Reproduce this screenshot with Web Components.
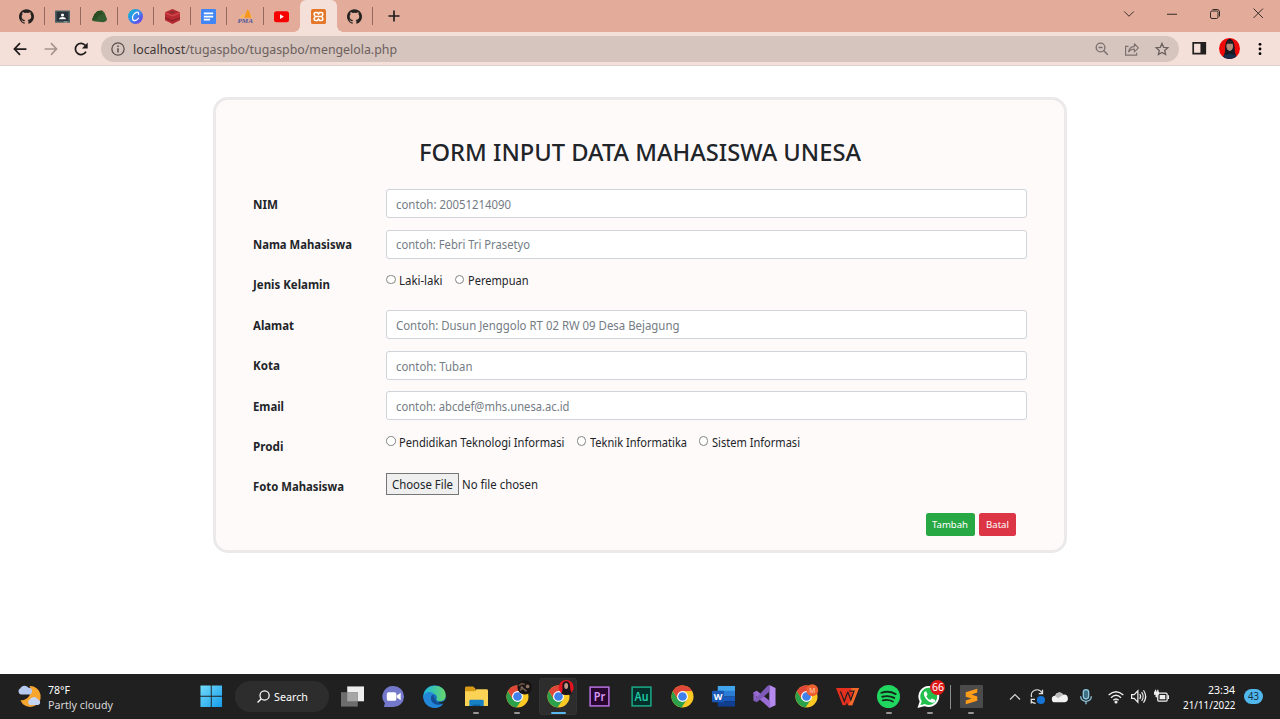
<!DOCTYPE html>
<html lang="id">
<head>
<meta charset="utf-8">
<title>Form Input Data Mahasiswa</title>
<style>
html,body{margin:0;height:100%;overflow:hidden}
body{font-family:"Noto Sans","Open Sans",sans-serif;background:#fff;color:#212529}
</style>
</head>
<body>
<desktop-screen></desktop-screen>
<script>
const chrome = `<circle cx="12" cy="12" r="11.5" fill="#fbc924"/><path d="M12 12 2.1 6.2A11.5 11.5 0 0 1 22 6.3L12 6.4Z" fill="#df4738"/><path d="M2.1 6.2A11.5 11.5 0 0 0 11 23.4L16.6 15 12 12 7.2 14.8Z" fill="#2ca14b"/><path d="M2.1 6.2A11.5 11.5 0 0 1 22 6.3H12L7.3 9.5 7 14.5Z" fill="#df4738"/><circle cx="12" cy="12" r="5.7" fill="#fff"/><circle cx="12" cy="12" r="4.5" fill="#3f80ea"/>`;
const ICONS = {
github:`<path fill="#24211f" d="M12 .3a12 12 0 0 0-3.8 23.4c.6.1.8-.3.8-.6v-2c-3.3.7-4-1.6-4-1.6-.6-1.4-1.4-1.8-1.4-1.8-1-.7.1-.7.1-.7 1.2 0 1.900 1.200 1.900 1.200 1 1.800 2.800 1.300 3.500 1 0-.8.4-1.300.7-1.600-2.700-.3-5.500-1.300-5.500-6 0-1.200.5-2.300 1.300-3.100-.2-.4-.6-1.600 0-3.200 0 0 1-.3 3.400 1.200a11.500 11.500 0 0 1 6 0c2.300-1.500 3.300-1.200 3.300-1.200.6 1.600.2 2.800 0 3.200.900.8 1.300 1.900 1.300 3.200 0 4.600-2.800 5.600-5.500 5.900.5.4.900 1 .900 2.200v3.300c0 .3.1.7.8.6A12 12 0 0 0 12 .3"/>`,
classroom:`<rect x="0" y="2.500" width="24" height="19.500" rx="1" fill="#4d6266"/><rect x="2.500" y="4.500" width="19" height="15" fill="#263238"/><circle cx="12" cy="9.500" r="2.500" fill="#fff"/><path d="M6.500 16.500c0-5 11-5 11 0Z" fill="#fff"/><path d="M14 19.500h6v2.500h-6z" fill="#89979a"/>`,
hill:`<path d="M0 17 4 8 9 3l7-1 4 4 4 10-1 3-5 2-12-1-5-1Z" fill="#355b30"/><path d="M9 3 4 8 0 17l7-1 5-7 5 1-2-7Z" fill="#2a4d24"/>`,
canva:`<defs><linearGradient id="g" x2="1" y2="1"><stop stop-color="#04bfcd"/><stop offset=".5" stop-color="#3b86ed"/><stop offset="1" stop-color="#7d2ae8"/></linearGradient></defs><circle cx="12" cy="12" r="12" fill="url(#g)"/><path d="M16.800 8.800c1-2.800-.8-4.300-3.300-3.300C9.500 7 7 11.500 7.200 14.800c.3 5.500 6 4.800 9.500 0" fill="none" stroke="#fff" stroke-width="2" stroke-linecap="round"/>`,
redbox:`<path d="m0 5 12-5 12 5v13l-12 6-12-6Z" fill="#b52b31"/><path d="m0 5 12 5 12-5v2l-12 5L0 7Z" fill="#d64a50"/><path d="m0 13 12 5 12-5v2l-12 5L0 15Z" fill="#8b1f27"/><path d="m6 5 5-2 6 2-5 2Z" fill="#843033"/>`,
docs:`<rect width="24" height="24" rx="1.500" fill="#4285f4"/><path d="M4.500 7h15M4.500 12h15M4.500 17h10" stroke="#fff" stroke-width="2.800"/>`,
pma:`<path d="M10 14 15 0c3 3 5 8 6 14Z" fill="#f8981a"/><path d="M2 14 11 5l-2 9ZM19 6l4 8h-2Z" fill="#f8ba54"/><text x="-1" y="23" font-size="10" font-style="italic" font-weight="700" font-family="Liberation Serif,serif" fill="#51569a" textLength="25" lengthAdjust="spacingAndGlyphs">PMA</text>`,
youtube:`<rect x="0" y="3.500" width="24" height="17.500" rx="4" fill="#f60000"/><path d="m9.700 8.500 6 3.700-6 3.700Z" fill="#fff"/>`,
xampp:`<rect width="24" height="24" rx="3" fill="#e57729"/><path d="M7.500 5.500h2.700L12 8l1.800-2.500h2.700a2.500 2.500 0 0 1 2.500 2.500c0 2-1 3-2 4 1 1 2 2 2 4a2.500 2.500 0 0 1-2.500 2.500h-2.700L12 16l-1.800 2.500H7.500A2.500 2.500 0 0 1 5 16c0-2 1-3 2-4-1-1-2-2-2-4a2.500 2.500 0 0 1 2.500-2.500Z" fill="none" stroke="#fff" stroke-width="2.500"/><path d="M8 12h8" stroke="#fff" stroke-width="2.500"/>`,
plus:`<path d="M12 2.500v19M2.500 12h19" stroke="#231d1b" stroke-width="2.900"/>`,
down:`<path d="m2.500 7 9.500 9.500L21.500 7" fill="none" stroke="#332a27" stroke-width="1.900"/>`,
up:`<path d="m2 17 10-10 10 10" fill="none" stroke="#ddd" stroke-width="2.200"/>`,
min:`<path d="M2 12.500h20" stroke="#332a27" stroke-width="2"/>`,
max:`<rect x="3" y="6" width="15" height="15" rx="3" fill="none" stroke="#332a27" stroke-width="2"/><path d="M7 3h9q5 0 5 5v9" fill="none" stroke="#332a27" stroke-width="2"/>`,
close:`<path d="m3 3 18 18M21 3 3 21" stroke="#332a27" stroke-width="1.900"/>`,
back:`<path d="M23 12H3M12 2 2.500 12 12 22" fill="none" stroke="#201c1b" stroke-width="3"/>`,
forward:`<path d="M1 12h20M12 2l9.500 10L12 22" fill="none" stroke="#a4938e" stroke-width="2.800"/>`,
reload:`<path d="M20.500 16.500A9.600 9.600 0 1 1 19.500 6" fill="none" stroke="#201c1b" stroke-width="3"/><path d="M23.500 1v10h-10Z" fill="#201c1b"/>`,
info:`<circle cx="12" cy="12" r="10.500" fill="none" stroke="#5a504d" stroke-width="2.200"/><path d="M12 10.500V18M12 6v2.500" stroke="#5a504d" stroke-width="2.600"/>`,
zoomout:`<circle cx="9.500" cy="9.500" r="7.500" fill="none" stroke="#7b706d" stroke-width="2.300"/><path d="m15 15 7 7M6 9.500h7" stroke="#7b706d" stroke-width="2.500"/>`,
share:`<path d="M6 7.500H1v15h19v-4" fill="none" stroke="#7b706d" stroke-width="2"/><path d="M6 17c1-6 4-9 10-9V3l7 7-7 7v-5q-6 0-10 5Z" fill="none" stroke="#7b706d" stroke-width="1.900" stroke-linejoin="round"/>`,
star:`<path d="m12 2.500 2.900 6.600 7.100.7-5.400 4.700 1.600 7L12 17.800l-6.200 3.700 1.600-7L2 9.800l7.100-.7Z" fill="none" stroke="#6a605d" stroke-width="2.200"/>`,
panel:`<path d="M2 3h20v18H2Z" fill="none" stroke="#221f1e" stroke-width="2.800"/><path d="M14 3h8v18h-8Z" fill="#221f1e"/>`,
avatar:`<defs><clipPath id="a"><circle cx="12" cy="12" r="12"/></clipPath></defs><g clip-path="url(#a)"><path fill="#ee0909" d="M0 0h24v24H0z"/><path d="M5 24c0-5 2-6 2-11 0-17 11-15 11 0 0 5 2 6 2 11Z" fill="#171923"/><ellipse cx="12.300" cy="9.300" rx="3.800" ry="5.500" fill="#b38b7b"/><path d="M8 6.500c1-4 7-4 8 0Z" fill="#201d25"/><path d="M3 22c5-5 14-5 18 0v3H3Z" fill="#1b2d4b"/></g>`,
menu:`<circle cx="12" cy="4" r="2.400"/><circle cx="12" cy="12" r="2.400"/><circle cx="12" cy="20" r="2.400"/>`,
weather:`<path d="M13 2a11 11 0 1 1-9.500 15A10 10 0 0 0 13 2Z" fill="#f6a52e"/><path d="M4 11a3.500 3.500 0 0 1-.5-6.500A5 5 0 0 1 12 4a3.500 3.500 0 0 1 .5 7Z" fill="#b6c9ee"/><path d="M13.500 22a3.300 3.300 0 0 1 0-6 4.500 4.500 0 0 1 8-.2 3.200 3.200 0 0 1 .5 6.200Z" fill="#c5d5f4"/>`,
windows:`<defs><linearGradient id="w" x2="1" y2="1"><stop stop-color="#73dcfb"/><stop offset="1" stop-color="#159be9"/></linearGradient></defs><path d="M.5.500h11v11H.5ZM12.500.500h11v11h-11ZM.5 12.500h11v11H.5ZM12.500 12.500h11v11h-11Z" fill="url(#w)"/>`,
search:`<circle cx="14" cy="10" r="8.500" fill="none" stroke="#fff" stroke-width="2.300"/><path d="m8 16-7 7" stroke="#fff" stroke-width="2.500"/>`,
taskview:`<path d="M6.500 1.500H24V17H6.500Z" fill="#eeeeef"/><path d="M0 7.500h17.500v15H0Z" fill="#6d6d6d"/><path d="M6.500 7.500h11V17h-11Z" fill="#a6a6a6"/>`,
chat:`<path d="M12 1a11 11 0 0 1 0 22H2l1-4A11 11 0 0 1 12 1Z" fill="#7478cb"/><rect x="5" y="7.500" width="10" height="9" rx="2" fill="#fff"/><path d="m15.500 11 4-3v8l-4-3Z" fill="#fff"/>`,
edge:`<defs><linearGradient id="e" x2="1"><stop stop-color="#1bb8dc"/><stop offset="1" stop-color="#67d66a"/></linearGradient></defs><circle cx="12" cy="12" r="11.700" fill="#176fc1"/><path d="M.5 11C2-3 24-2 23.700 11c0 7-8 7-10 4 2-2 0-6-3-6C6 8 2 10 .5 14Z" fill="url(#e)"/><path d="M.5 12c2-6 10-6 12-1-3-2-5 1-4 4 1 5 7 7 12.500 5C14 28 0 23 .5 12Z" fill="#2486d6"/><path d="M9 11c-3 8 6 12 12.500 7.500-3 1-9 0-8-3.500-3-1-3-4-1.500-5Z" fill="#144f93"/><path d="M15.500 17.500c3 1 6 0 8-2.500l1 2-3 2c-2 1-4 .5-6-1.500Z" fill="#202020"/>`,
explorer:`<path d="M0 3q0-1.500 1.500-1.500h7L11 4v4H0Z" fill="#d99b16"/><path d="M0 6.500h10l2-2h10.500Q24 4.500 24 6v16H0Z" fill="#fcd354"/><path d="M4.500 22v-5q0-1.500 1.500-1.500h12q1.500 0 1.500 1.500v5Z" fill="#1780c5"/><path d="M8 22v-1.500h8V22Z" fill="#0f5f99"/>`,
chrome,
chromedark: chrome+`<g transform="translate(19.500 2.500)"><circle r="7.500" fill="#171313"/><path d="M-6-2-3-4 0-3M-5 3-2 1 2 4" stroke="#6b5749" stroke-width="1.700" fill="none"/><circle cx="3" cy="-1" r="2" fill="#8b7061"/><circle cx="-3" cy="0" r="1.300" fill="#7e6658"/></g>`,
chromeuser: chrome+`<g transform="translate(20 2.500)"><circle r="7.800" fill="#e61420"/><path d="M-5 7Q-3 3-4-2C-4-8 4-8 4-2q0 5 2 9Q0 9-5 7" fill="#18151b"/><ellipse cy="-1.500" rx="2" ry="3.200" fill="#c39a8a"/></g>`,
chromem: chrome+`<circle cx="18" cy="5.500" r="6.200" fill="#ed6030"/><text x="18" y="8" text-anchor="middle" font-size="7" fill="#ffd1b8">M</text>`,
pr:`<rect x="2.200" y="2.200" width="19.600" height="19.600" fill="#28062f" stroke="#b56ee0" stroke-width="1.600"/><text x="12" y="16.500" text-anchor="middle" font-size="12.500" font-weight="600" fill="#d796f5" textLength="12" lengthAdjust="spacingAndGlyphs">Pr</text>`,
au:`<rect x="2.200" y="2.200" width="19.600" height="19.600" fill="#052d29" stroke="#1ba886" stroke-width="1.600"/><text x="12" y="16.500" text-anchor="middle" font-size="12.500" font-weight="600" fill="#20c9a5" textLength="14.500" lengthAdjust="spacingAndGlyphs">Au</text>`,
word:`<path d="M6 1h18v6H6Z" fill="#41a5ee"/><path d="M6 6h18v6H6Z" fill="#2b7cd3"/><path d="M6 12h18v5H6Z" fill="#185abd"/><path d="M6 17h18v5.500H6Z" fill="#103f91"/><rect x="0" y="6" width="12.500" height="12" rx="1" fill="#1b59b6"/><text x="6.200" y="15.500" font-size="10" text-anchor="middle" font-weight="700" fill="#fff" textLength="9" lengthAdjust="spacingAndGlyphs">W</text>`,
vs:`<path fill-rule="evenodd" d="m17 0 6.500 3v18L17 24Z" fill="#b58aee"/><path d="M.5 7.500 4 6l14 11v7h-1L.5 9Z" fill="#9a6dd6"/><path d="M17 0v7L4 18 .5 16.500 15 1Z" fill="#7d5ab8"/><path d="M.5 7.500 3.500 9v6l-3 1.500Z" fill="#8a62c8"/>`,
wps:`<path d="M0 3h24l-7 18h-4.500l-1-3-1.500 3H7Z" fill="#e5301f"/><path d="M16 3h8l-7 18h-4l5-12-2-3Z" fill="#f26a2c"/><path d="M4.500 6.500 8.700 17l3.600-10M12.500 7.500l3 8 3.300-9h-5" fill="none" stroke="#202020" stroke-width="1.300"/>`,
spotify:`<circle cx="12" cy="12" r="12" fill="#20d760"/><path d="M4.500 8.200c5-1.700 10.500-1.200 15 1.300M5.500 12.300c4.500-1.300 8.500-.9 12.500 1.200M6 16c4-.9 7.200-.6 10.500 1.200" stroke="#15291b" stroke-width="2" fill="none" stroke-linecap="round"/>`,
whatsapp:`<path d="M12.500 2A10 10 0 1 1 7 21l-6 1.500L2.800 17A10 10 0 0 1 12.500 2Z" fill="#22bf4d" stroke="#fff" stroke-width="2"/><path d="M8.500 6.500 10 10l-1.300 2q1.300 2.500 4 3.700l1.700-1.700 3.500 1.700c.5 4-5 3.500-8.400 0S4.500 7 8.500 6.500Z" fill="#fff"/>`,
sublime:`<rect x="0" y="0" width="24" height="24" rx="1" fill="#4b4b4b"/><path d="m6 7.500 12-3.700v4L12 10l6 2v4.500L6 20.200v-4l6-2-6-2Z" fill="#ff9d18"/>`,
sync:`<path d="M2.500 13A9 9 0 0 1 19 6M2.500 20.500A10 10 0 0 0 9 23M20 1v6.500h-6M2 23v-6.500h6" fill="none" stroke="#e4e4e4" stroke-width="2"/><circle cx="17.500" cy="17.500" r="6.500" fill="#1574d4"/>`,
cloud:`<path d="M5 20a5 5 0 0 1-.5-10A7 7 0 0 1 17 8.500a5.800 5.800 0 0 1 2 11.500Z" fill="#f1f1f1"/><path d="M4.500 10A7 7 0 0 1 17 8.500L9 14Z" fill="#bbb"/>`,
mic:`<rect x="8" y="1" width="8" height="14" rx="4" fill="#3f7183" stroke="#8dc8df" stroke-width="2"/><path d="M4 11c0 10 16 10 16 0M12 18.500V23" fill="none" stroke="#8dc8df" stroke-width="2"/>`,
wifi:`<path d="M1 9q11-10 22 0M4.500 13q7.500-7 15 0M8 17q4-4 8 0" fill="none" stroke="#eee" stroke-width="2.100"/><circle cx="12" cy="19.500" r="2.300" fill="#eee"/>`,
sound:`<path d="M1 9h4l6-6v18l-6-6H1Z" fill="none" stroke="#eee" stroke-width="2"/><path d="M14 8q3 4 0 8M17 5q5 7 0 14M20 2q7 10 0 20" fill="none" stroke="#eee" stroke-width="1.900"/>`,
battery:`<rect x="6" y="6.500" width="15" height="13" rx="2" fill="none" stroke="#eee" stroke-width="2"/><path d="M9 9.500h9v7H9ZM22 10h2v6h-2ZM0 4h8v5H5.500v4h-3V9H0ZM1.500 1h2v4h-2ZM5 1h2v4H5Z" fill="#eee"/>`
};
function define(name, html, setup){
  const t=document.createElement('template'); t.innerHTML=html;
  customElements.define(name, class extends HTMLElement{
    connectedCallback(){
      if(this.shadowRoot) return;
      this.attachShadow({mode:'open'}).append(t.content.cloneNode(true));
      if(setup) setup(this,this.shadowRoot);
    }
  });
}
/* Line of text condensed or widened to the width given in "w". */
define('fit-text', `<style>:host{display:block;white-space:nowrap;flex:none}span{display:inline-block;transform-origin:0 50%}</style><span><slot></slot></span>`, (el,r)=>{
  const s=r.querySelector('span'), w=+el.getAttribute('w');
  s.style.transform=`scaleX(${w/s.getBoundingClientRect().width})`;
  el.style.width=w+'px';
});
define('ui-icon', `<style>:host{display:block;flex:none}svg{display:block;width:100%;height:100%;overflow:visible;font-family:"Noto Sans",sans-serif}</style><svg viewBox="0 0 24 24"></svg>`, (el,r)=>{
  r.querySelector('svg').innerHTML=ICONS[el.getAttribute('name')];
  const s=el.getAttribute('size')||16; el.style.width=el.style.height=s+'px';
});
define('browser-tab', `<style>
:host{display:flex;width:36.500px;height:32px;align-items:center;justify-content:center;box-sizing:border-box;position:relative;flex:none}
:host([sep])::after{content:"";position:absolute;right:0;top:7px;width:1px;height:18px;background:#94695d}
:host([active]){background:#f5e0d9;border-radius:6px 6px 0 0}
:host([active])::before{content:"";position:absolute;left:-6px;right:-6px;bottom:0;height:6px;background:radial-gradient(circle at 0 0,transparent 5.500px,#f5e0d9 6px) 0 0/6px 6px no-repeat,radial-gradient(circle at 100% 0,transparent 5.500px,#f5e0d9 6px) 100% 0/6px 6px no-repeat}
</style><ui-icon></ui-icon>`, (el,r)=>{
  const i=document.createElement('ui-icon'); i.setAttribute('name',el.getAttribute('icon')); i.setAttribute('size',15); r.querySelector('ui-icon').replaceWith(i);
});
</script>
<script>
define('tab-strip', `<style>
:host{display:flex;height:32px;background:#e3ac9a;padding-left:8px;box-sizing:border-box;align-items:center}
.plus{margin-left:14px}.win{margin-left:auto;display:flex;align-items:center;gap:31px;padding:0 16px 5px 0}
</style>
<browser-tab icon="github" sep></browser-tab><browser-tab icon="classroom" sep></browser-tab><browser-tab icon="hill" sep></browser-tab><browser-tab icon="canva" sep></browser-tab><browser-tab icon="redbox" sep></browser-tab><browser-tab icon="docs" sep></browser-tab><browser-tab icon="pma" sep></browser-tab><browser-tab icon="youtube"></browser-tab><browser-tab icon="xampp" active></browser-tab><browser-tab icon="github" sep></browser-tab>
<ui-icon class="plus" name="plus" size="14"></ui-icon>
<div class="win"><ui-icon name="down" size="12"></ui-icon><ui-icon name="min" size="12"></ui-icon><ui-icon name="max" size="12"></ui-icon><ui-icon name="close" size="12.500"></ui-icon></div>`);
define('address-bar', `<style>
:host{display:flex;height:34px;background:#f5e0d9;border-bottom:1px solid #ddd0cc;align-items:center;box-sizing:border-box;padding:0 13px;font-size:13px}
.nav{display:flex;gap:16.500px;width:88px;align-items:center}
.box{flex:1;height:26px;border-radius:13px;background:#d6c5bf;display:flex;align-items:center;padding:0 10px;box-sizing:border-box;color:#6b605c}
.box fit-text{margin-left:8px}b{font-weight:400;color:#413835}
.acts{margin-left:auto;display:flex;gap:16px}.end{display:flex;align-items:center;gap:13px;margin-left:13px}
</style>
<div class="nav"><ui-icon name="back" size="14"></ui-icon><ui-icon name="forward" size="14"></ui-icon><ui-icon name="reload" size="14"></ui-icon></div>
<div class="box"><ui-icon name="info" size="14"></ui-icon><fit-text w="264"><b>localhost</b>/tugaspbo/tugaspbo/mengelola.php</fit-text>
<div class="acts"><ui-icon name="zoomout" size="14"></ui-icon><ui-icon name="share" size="14"></ui-icon><ui-icon name="star" size="14"></ui-icon></div></div>
<div class="end"><ui-icon name="panel" size="14.500"></ui-icon><ui-icon name="avatar" size="21"></ui-icon><ui-icon name="menu" size="14"></ui-icon></div>`);
define('form-row', `<style>
:host{display:grid;grid-template-columns:133px 641px;height:40.400px;align-items:start;font-size:12.200px}
.l{height:30px;display:flex;align-items:center;font-weight:700;color:#212529}
</style><div class="l"><slot name="label"></slot></div><slot></slot>`);
define('text-field', `<style>
:host{display:flex;height:29px;box-sizing:border-box;border:1px solid #ced4da;border-radius:3px;background:#fff;align-items:center;padding:1.500px 0 0 9px;color:#747c84}
</style><slot></slot>`);
define('radio-group', `<style>:host{display:flex;gap:12px;height:21px;align-items:center}</style><slot></slot>`);
define('radio-option', `<style>
:host{display:flex;gap:3.500px;align-items:center;color:#212529}
i{width:9.500px;height:9.500px;box-sizing:border-box;border:1px solid #838383;border-radius:50%;background:#fff;margin-top:-2px}
</style><i></i><slot></slot>`);
define('file-picker', `<style>
:host{display:flex;align-items:center;gap:3px;height:22.500px;margin-top:1px;color:#212529}
.b{height:22.500px;width:73px;box-sizing:border-box;border:1px solid #767676;background:#efefef;display:flex;align-items:center;justify-content:center}
</style><div class="b"><slot name="button"></slot></div><slot></slot>`);
define('action-button', `<style>
:host{display:flex;height:23.500px;border-radius:2.500px;align-items:center;justify-content:center;color:#fff;font-size:9.800px;width:49.500px;background:#28a745;box-sizing:border-box;padding-bottom:1px}
:host([kind=danger]){width:37px;background:#dc3545}
</style><slot></slot>`);
define('student-form', `<style>
:host{display:block;box-sizing:border-box;width:854px;height:456px;margin:30.700px 0 0 213px;border:3px solid #ebe9ea;border-radius:15px;background:#fffafa;padding:36.500px 37px 0}
h2{margin:0 0 22px;height:31px;font-size:23.500px;font-weight:480;display:flex;justify-content:center;align-items:center;color:#212529}
.a{display:flex;justify-content:flex-end;gap:3.500px;padding:.600px 11.500px 0 0}
</style>
<h2><fit-text w="442">FORM INPUT DATA MAHASISWA UNESA</fit-text></h2>
<form-row><fit-text slot="label" w="25">NIM</fit-text><text-field><fit-text w="115">contoh: 20051214090</fit-text></text-field></form-row>
<form-row><fit-text slot="label" w="99">Nama Mahasiswa</fit-text><text-field><fit-text w="134">contoh: Febri Tri Prasetyo</fit-text></text-field></form-row>
<form-row><fit-text slot="label" w="77">Jenis Kelamin</fit-text><radio-group><radio-option><fit-text w="43.500">Laki-laki</fit-text></radio-option><radio-option><fit-text w="60.500">Perempuan</fit-text></radio-option></radio-group></form-row>
<form-row><fit-text slot="label" w="41">Alamat</fit-text><text-field><fit-text w="283.500">Contoh: Dusun Jenggolo RT 02 RW 09 Desa Bejagung</fit-text></text-field></form-row>
<form-row><fit-text slot="label" w="27">Kota</fit-text><text-field><fit-text w="76.500">contoh: Tuban</fit-text></text-field></form-row>
<form-row><fit-text slot="label" w="31">Email</fit-text><text-field><fit-text w="173.500">contoh: abcdef@mhs.unesa.ac.id</fit-text></text-field></form-row>
<form-row><fit-text slot="label" w="30.500">Prodi</fit-text><radio-group><radio-option><fit-text w="165.500">Pendidikan Teknologi Informasi</fit-text></radio-option><radio-option><fit-text w="97">Teknik Informatika</fit-text></radio-option><radio-option><fit-text w="88">Sistem Informasi</fit-text></radio-option></radio-group></form-row>
<form-row><fit-text slot="label" w="91">Foto Mahasiswa</fit-text><file-picker><fit-text slot="button" w="61">Choose File</fit-text><fit-text w="76">No file chosen</fit-text></file-picker></form-row>
<div class="a"><action-button><fit-text w="36">Tambah</fit-text></action-button><action-button kind="danger"><fit-text w="23">Batal</fit-text></action-button></div>`);
define('task-item', `<style>
:host{display:flex;width:41.250px;height:45px;align-items:center;justify-content:center;position:relative;flex:none}
:host([active])::before{content:"";position:absolute;left:1.500px;right:2px;top:4px;bottom:4px;border-radius:3px;background:#2d2d2d;border:1px solid #333;box-sizing:border-box}
:host([dot])::after,:host([active])::after{content:"";position:absolute;left:calc(50% - 3px);bottom:5px;width:6px;height:2.500px;border-radius:2px;background:#969696}
:host([active])::after{left:calc(50% - 7.500px);width:15px;background:#59b7ee}
.i{position:relative}
.n{position:absolute;right:5px;top:6px;width:15px;height:15px;border-radius:50%;background:#dc1818;color:#fff;font-size:10.500px;line-height:15px;display:flex;justify-content:center}
</style><div class="i"></div>`, (el,r)=>{
  r.querySelector('.i').innerHTML=`<ui-icon name="${el.getAttribute('icon')}" size="${el.getAttribute('size')||23}"></ui-icon>`;
  if(el.hasAttribute('count')) r.querySelector('.i').insertAdjacentHTML('afterend',`<div class="n"><fit-text w="12">${el.getAttribute('count')}</fit-text></div>`);
});
define('task-bar', `<style>
:host{display:flex;height:45px;background:#202020;align-items:center;color:#fff;font-size:11px;flex:none;line-height:15px}
.w{display:flex;gap:7px;padding-left:18px;width:172.400px;align-items:center}
.w ui-icon{margin:0 1px 2px -1px}
.w small{font-size:11px;color:#d7d7d7;display:block}
.s{width:94px;height:31px;border-radius:16px;background:#2d2d2d;display:flex;align-items:center;justify-content:center;gap:4px;margin:0 3.100px 0 3px;box-sizing:border-box;padding-left:2px}
.apps{display:flex;position:relative}.line{position:absolute;left:618.500px;top:11px;width:1px;height:24px;background:#8c8c8c}
.tray{display:flex;align-items:center;flex:1;margin-left:17px;padding-right:17px}
.c{margin-left:auto;text-align:right;display:flex;flex-direction:column;align-items:flex-end}
.n{width:19px;height:15.500px;border-radius:9px;background:#50b8ef;color:#163040;font-size:10px;display:flex;align-items:center;justify-content:center;margin-left:9px}
</style>
<div class="w"><ui-icon name="weather" size="23"></ui-icon><div><fit-text w="22">78°F</fit-text><small><fit-text w="65">Partly cloudy</fit-text></small></div></div>
<task-item icon="windows" size="22.500"></task-item>
<div class="s"><ui-icon name="search" size="13"></ui-icon><fit-text w="34">Search</fit-text></div>
<div class="apps">
<task-item icon="taskview"></task-item><task-item icon="chat"></task-item><task-item icon="edge"></task-item><task-item icon="explorer" dot></task-item><task-item icon="chromedark" dot></task-item><task-item icon="chromeuser" active></task-item><task-item icon="pr"></task-item><task-item icon="au"></task-item><task-item icon="chrome"></task-item><task-item icon="word"></task-item><task-item icon="vs"></task-item><task-item icon="chromem"></task-item><task-item icon="wps"></task-item><task-item icon="spotify" dot></task-item><task-item icon="whatsapp" dot count="66"></task-item><task-item icon="sublime" dot></task-item><span class="line"></span></div>
<div class="tray"><ui-icon name="up" size="12"></ui-icon><ui-icon style="margin-left:9px" name="sync" size="15"></ui-icon><ui-icon style="margin-left:7px" name="cloud" size="16"></ui-icon><ui-icon style="margin-left:10px" name="mic" size="16"></ui-icon><ui-icon style="margin-left:14px" name="wifi" size="16"></ui-icon><ui-icon style="margin-left:7px" name="sound" size="15"></ui-icon><ui-icon style="margin-left:8px" name="battery" size="15"></ui-icon>
<div class="c"><fit-text w="27">23:34</fit-text><fit-text w="52.500">21/11/2022</fit-text></div><div class="n"><fit-text w="11">43</fit-text></div></div>`);
define('desktop-screen', `<style>:host{display:flex;flex-direction:column;width:1280px;height:719px;overflow:hidden}main{flex:1;min-height:0;display:flow-root}</style><tab-strip></tab-strip><address-bar></address-bar><main><student-form></student-form></main><task-bar></task-bar>`);
</script>
</body>
</html>
